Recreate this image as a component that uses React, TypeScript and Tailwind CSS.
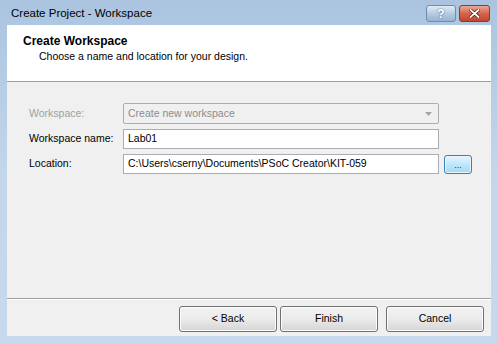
import React from 'react';

const font = { fontFamily: '"Liberation Sans", Arial, sans-serif' };

const TitleButton: React.FC<{ kind: 'help' | 'close' }> = ({ kind }) =>
  kind === 'help' ? (
    <div className="w-[30px] h-[17px] rounded-[3px] border border-[#6f8cad] bg-gradient-to-b from-[#e3ecf6] via-[#b6cbe3] to-[#98b3d3] flex items-center justify-center">
      <span className="text-[12px] font-bold text-white leading-none [text-shadow:0_0_2px_#3a4f66]">?</span>
    </div>
  ) : (
    <div className="w-[31px] h-[17px] rounded-[3px] border border-[#8a3b2c] bg-gradient-to-b from-[#e9a99a] via-[#d4654b] to-[#c0472f] flex items-center justify-center">
      <svg width="11" height="9" viewBox="0 0 11 9">
        <path d="M1.5 1 L9.5 8 M9.5 1 L1.5 8" stroke="#3b1d17" strokeWidth="3.2" strokeLinecap="square" />
        <path d="M1.5 1 L9.5 8 M9.5 1 L1.5 8" stroke="#ffffff" strokeWidth="1.8" strokeLinecap="square" />
      </svg>
    </div>
  );

const Button: React.FC<{ label: string; className?: string }> = ({ label, className = '' }) => (
  <div
    className={`h-[26px] rounded-[3px] border border-[#707070] bg-gradient-to-b from-[#f2f2f2] via-[#ebebeb] to-[#d5d5d5] shadow-[inset_0_0_0_1px_#fcfcfc] flex items-center justify-center text-[10.5px] text-black ${className}`}
  >
    {label}
  </div>
);

export default function App() {
  return (
    <div
      className="w-[497px] h-[343px] bg-gradient-to-b from-[#aac4e0] via-[#c3d6ea] to-[#c7d9ec] pl-[7px] pr-[6px] pb-[7px] flex flex-col"
      style={font}
    >
      {/* Title bar */}
      <div className="h-[25px] flex items-start justify-between">
        <span className="mt-[5px] ml-[4px] text-[11.5px] text-black">Create Project - Workspace</span>
        <div className="mt-[5px] mr-[1px] flex gap-[3px]">
          <TitleButton kind="help" />
          <TitleButton kind="close" />
        </div>
      </div>

      {/* Client */}
      <div className="flex-1 bg-[#f0f0f0] flex flex-col">
        {/* Header */}
        <div className="h-[57px] bg-white border-b border-[#a0a0a0] pl-[16px] pt-[9px]">
          <div className="text-[12px] font-bold text-black leading-[14px]">Create Workspace</div>
          <div className="ml-[16px] mt-[1px] text-[10.5px] text-black leading-[14px]">Choose a name and location for your design.</div>
        </div>

        {/* Form */}
        <div className="pl-[22px] pt-[21px] flex flex-col gap-[5px] text-[10.5px]">
          <div className="flex items-center">
            <span className="w-[94px] text-[#a0a0a0]">Workspace:</span>
            <div className="w-[316px] h-[21px] rounded-[2px] border border-[#adadad] bg-[#f0f0f0] flex items-center justify-between pl-[4px] pr-[6px] text-[#8d8d8d]">
              <span>Create new workspace</span>
              <svg width="7" height="4" viewBox="0 0 7 4">
                <path d="M0 0 H7 L3.5 4 Z" fill="#a6a6a6" />
              </svg>
            </div>
          </div>
          <div className="flex items-center">
            <span className="w-[94px] text-black">Workspace name:</span>
            <div className="w-[316px] h-[20px] border border-[#abadb3] bg-white flex items-center pl-[4px] text-black">
              Lab01
            </div>
          </div>
          <div className="flex items-center">
            <span className="w-[94px] text-black">Location:</span>
            <div className="w-[316px] h-[20px] border border-[#abadb3] bg-white flex items-center pl-[4px] text-black">
              C:\Users\cserny\Documents\PSoC Creator\KIT-059
            </div>
            <div className="ml-[5px] w-[28px] h-[19px] rounded-[3px] border border-[#3c7fb1] bg-gradient-to-b from-[#eaf6fd] via-[#bee6fd] to-[#a7d9f5] shadow-[inset_0_0_0_1px_#e6f4fc] flex items-end justify-center pb-[3px] text-[9px] leading-none text-[#333]">
              ...
            </div>
          </div>
        </div>

        <div className="flex-1" />

        {/* Footer */}
        <div className="border-t border-[#a0a0a0] shadow-[inset_0_1px_0_#ffffff] h-[38px] flex items-start justify-end pr-[7px] pt-[7px]">
          <Button label="< Back" className="w-[98px]" />
          <Button label="Finish" className="w-[98px] ml-[3px]" />
          <Button label="Cancel" className="w-[98px] ml-[8px]" />
        </div>
      </div>
    </div>
  );
}
